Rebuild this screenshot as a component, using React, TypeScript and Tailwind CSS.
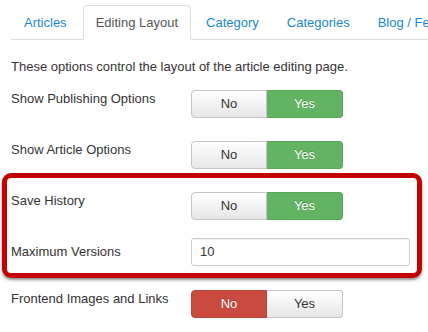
import React from "react"

const tabs = ["Articles", "Editing Layout", "Category", "Categories", "Blog / Featured Layouts"]

function Toggle({ value }: { value: "yes" | "no" }) {
  const off = "bg-gradient-to-b from-white to-[#e6e6e6] text-[#333] border-[#c5c5c5]"
  return (
    <div className="flex h-[28px] w-[152px] text-[13px]">
      <div
        className={`flex w-[76px] items-center justify-center rounded-l-[4px] border ${
          value === "no" ? "bg-[#c94a3f] border-[#b8443a] text-white [text-shadow:0_-1px_0_rgba(0,0,0,0.25)]" : off
        }`}
      >
        No
      </div>
      <div
        className={`flex w-[76px] items-center justify-center rounded-r-[4px] border border-l-0 ${
          value === "yes" ? "bg-[#62b462] border-[#58a658] text-white [text-shadow:0_-1px_0_rgba(0,0,0,0.2)]" : off
        }`}
      >
        Yes
      </div>
    </div>
  )
}

function Row({ label, children, className = "" }: { label: string; children: React.ReactNode; className?: string }) {
  return (
    <div className={`flex items-start ${className}`}>
      <div className="w-[180px] shrink-0 pt-[1px] text-[13px] leading-[16px] text-[#333]">{label}</div>
      {children}
    </div>
  )
}

export default function App() {
  return (
    <div className="h-[332px] w-[428px] overflow-hidden bg-white font-['Liberation_Sans',Arial,sans-serif]">
      <div className="pt-[5px] pl-[11px]">
        <ul className="flex w-[600px] border-b border-[#ddd] text-[13px] leading-[20px]">
          {tabs.map((t, i) => (
            <li key={t} className={i === 0 ? "mr-[3px]" : "mr-[2px]"}>
              <div
                className={`-mb-px flex h-[35px] items-center whitespace-nowrap rounded-t-[4px] border px-[12px] ${
                  i === 1 ? "border-[#ddd] border-b-white bg-white text-[#555]" : "border-transparent text-[#1a87d1]"
                }`}
              >
                {t}
              </div>
            </li>
          ))}
        </ul>
      </div>

      <div className="px-[11px]">
        <p className="mt-[19px] text-[13px] leading-[16px] text-[#333]">
          These options control the layout of the article editing page.
        </p>

        <Row label="Show Publishing Options" className="mt-[15px]">
          <Toggle value="yes" />
        </Row>
        <Row label="Show Article Options" className="mt-[23px]">
          <Toggle value="yes" />
        </Row>

        <div className="ml-[-9px] mt-[4px] w-[420px] rounded-[9px] border-[5px] border-[#c20000] pb-[7px] pl-[4px] pt-[14px] shadow-[0_2px_3px_rgba(0,0,0,0.45)]">
          <Row label="Save History">
            <Toggle value="yes" />
          </Row>
          <div className="mt-[18px] flex items-center">
            <div className="w-[180px] shrink-0 text-[13px] leading-[16px] text-[#333]">Maximum Versions</div>
            <div className="flex h-[28px] w-[219px] items-center rounded-[3px] border border-[#ccc] px-[8px] text-[13px] text-[#333] shadow-[inset_0_1px_1px_rgba(0,0,0,0.05)]">
              10
            </div>
          </div>
        </div>

        <Row label="Frontend Images and Links" className="mt-[12px]">
          <Toggle value="no" />
        </Row>
      </div>
    </div>
  )
}
